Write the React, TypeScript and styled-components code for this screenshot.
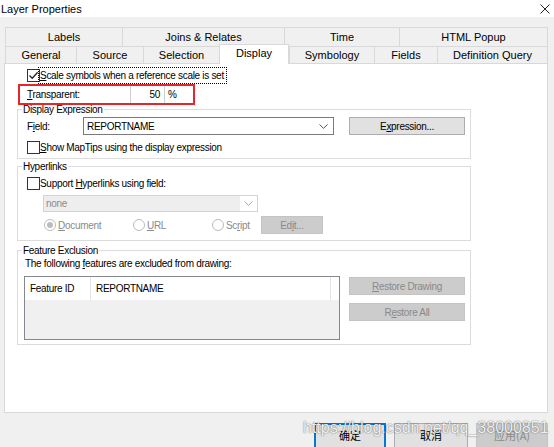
import React from "react";
import styled, { createGlobalStyle } from "styled-components";

const UI_FONT = `"Liberation Sans", "Noto Sans CJK SC", Arial, sans-serif`;

const GlobalStyle = createGlobalStyle`
  html, body {
    margin: 0;
    padding: 0;
    background: #f0f0f0;
  }
  body {
    font-family: "Liberation Sans", "Noto Sans CJK SC", Arial, sans-serif;
    color: #000;
  }
  * {
    box-sizing: border-box;
  }
`;

const Window = styled.div`
  position: relative;
  width: 554px;
  height: 447px;
  overflow: hidden;
  background: #f0f0f0;
`;

const TitleBar = styled.div`
  height: 17px;
  background: #fff;
  display: flex;
  align-items: center;
  justify-content: space-between;
  padding: 0 4px 0 1px;
  font-size: 11px;
  color: #000;
`;

const Body = styled.div`
  padding: 10px 6px 0 4px;
`;

const TabRow = styled.div<{ $height: number }>`
  display: flex;
  height: ${(p) => p.$height}px;
  margin-left: 1px;
`;

const Tab = styled.div<{ $width: number; $active?: boolean }>`
  flex: 0 0 ${(p) => p.$width}px;
  display: flex;
  align-items: center;
  justify-content: center;
  border-top: 1px solid #d9d9d9;
  border-left: 1px solid #d9d9d9;
  background: ${(p) => (p.$active ? "#fff" : "#f0f0f0")};
  font-size: 11px;
  color: #000;
  &:last-child {
    border-right: 1px solid #d9d9d9;
  }
  ${(p) =>
    p.$active &&
    `
    position: relative;
    z-index: 1;
    margin-top: -2px;
    margin-bottom: -1px;
    border-right: 1px solid #d9d9d9;
    padding-bottom: 3px;
  `}
`;

const Panel = styled.div`
  height: 350px;
  border: 1px solid #d9d9d9;
  background: #fff;
  font-family: ${UI_FONT};
  font-size: 10px;
  letter-spacing: -0.3px;
  display: flex;
  flex-direction: column;
`;

const CheckRow = styled.div<{ $top?: number; $left?: number }>`
  display: flex;
  align-items: center;
  height: 13px;
  margin-top: ${(p) => p.$top ?? 0}px;
  margin-left: ${(p) => p.$left ?? 0}px;
  line-height: 13px;
  white-space: nowrap;
`;

const Box = styled.span`
  flex: 0 0 13px;
  width: 13px;
  height: 13px;
  border: 1px solid #333;
  background: #fff;
  display: flex;
  align-items: center;
  justify-content: center;
`;

const FocusLabel = styled.span`
  outline: 1px dotted #000;
  outline-offset: 1px;
  padding: 0 1px 0 0;
`;

const RedBox = styled.div`
  display: flex;
  width: 177px;
  height: 21px;
  margin: 2px 0 0 13px;
  border: 2px solid #e5262a;
`;

const RedLabel = styled.div`
  width: 110px;
  padding-left: 7px;
  display: flex;
  align-items: center;
`;

const NumberCell = styled.div`
  width: 35px;
  border-left: 1px solid #cfcfcf;
  border-right: 1px solid #cfcfcf;
  display: flex;
  align-items: center;
  justify-content: flex-end;
  padding-right: 4px;
`;

const UnitCell = styled.div`
  display: flex;
  align-items: center;
  padding-left: 3px;
`;

const Group = styled.fieldset<{ $top: number }>`
  width: 454px;
  margin: ${(p) => p.$top}px 0 0 12px;
  padding: 0;
  border: 1px solid #dcdcdc;
  min-width: 0;
`;

const Legend = styled.legend`
  margin-left: 4px;
  padding: 0 1px;
  line-height: 11px;
`;

const GroupBody = styled.div<{ $pad: string }>`
  padding: ${(p) => p.$pad};
  display: flex;
  flex-direction: column;
`;

const FieldRow = styled.div`
  display: flex;
  align-items: center;
  height: 18px;
`;

const FieldLabel = styled.span`
  width: 56px;
`;

const Select = styled.div<{ $width: number }>`
  width: ${(p) => p.$width}px;
  height: 18px;
  border: 1px solid #7a7a7a;
  background: #fff;
  display: flex;
  align-items: center;
  justify-content: space-between;
  padding: 0 5px 0 3px;
`;

const DisabledSelect = styled.div`
  width: 215px;
  height: 17px;
  margin: 5px 0 0 16px;
  border: 1px solid #d4d4d4;
  background: #fff;
  display: flex;
  color: #8a8a8a;
`;

const DisabledField = styled.div`
  flex: 1;
  background: #eeeeee;
  display: flex;
  align-items: center;
  padding-left: 2px;
`;

const ChevronBox = styled.div`
  flex: 0 0 17px;
  display: flex;
  align-items: center;
  justify-content: center;
`;

const Button = styled.div<{ $width: number; $disabled?: boolean; $height?: number }>`
  width: ${(p) => p.$width}px;
  height: ${(p) => p.$height ?? 18}px;
  flex: 0 0 auto;
  display: flex;
  align-items: center;
  justify-content: center;
  background: ${(p) => (p.$disabled ? "#cccccc" : "#e1e1e1")};
  border: 1px solid ${(p) => (p.$disabled ? "#c4c4c4" : "#adadad")};
  color: ${(p) => (p.$disabled ? "#8a8a8a" : "#000")};
`;

const RadioRow = styled.div`
  display: grid;
  grid-template-columns: 89px 79px 49px 62px;
  align-items: center;
  height: 18px;
  margin: 4px 0 0 17px;
  color: #8a8a8a;
`;

const RadioItem = styled.div`
  display: flex;
  align-items: center;
  gap: 2px;
`;

const RadioCircle = styled.span<{ $checked?: boolean }>`
  width: 12px;
  height: 12px;
  border-radius: 50%;
  border: 1px solid #bcbcbc;
  background: #fff;
  display: flex;
  align-items: center;
  justify-content: center;
  &::after {
    content: "";
    width: 6px;
    height: 6px;
    border-radius: 50%;
    background: ${(p) => (p.$checked ? "#bcbcbc" : "transparent")};
  }
`;

const Note = styled.div`
  height: 12px;
  line-height: 12px;
  padding-left: 1px;
`;

const ExclusionRow = styled.div`
  display: flex;
  margin-top: 6px;
`;

const ListBox = styled.div`
  width: 316px;
  height: 64px;
  border: 1px solid #828790;
  background: #f0f0f0;
`;

const ListHeader = styled.div`
  display: flex;
  height: 23px;
  background: #fff;
`;

const HeaderCell = styled.div<{ $width: number }>`
  flex: 0 0 ${(p) => p.$width}px;
  display: flex;
  align-items: center;
  padding-left: 5px;
  border-right: 1px solid #e5e5e5;
`;

const SideButtons = styled.div`
  display: flex;
  flex-direction: column;
  gap: 8px;
  margin-left: 9px;
  padding-top: 1px;
`;

const Footer = styled.div`
  display: flex;
  justify-content: flex-end;
  gap: 8px;
  margin-top: 10px;
  font-family: "Noto Sans CJK SC", "Liberation Sans", sans-serif;
  font-size: 11px;
`;

const FooterButton = styled.div<{ $width: number; $kind: "default" | "normal" | "disabled" }>`
  width: ${(p) => p.$width}px;
  height: 26px;
  display: flex;
  align-items: center;
  justify-content: center;
  padding-bottom: 2px;
  background: ${(p) => (p.$kind === "disabled" ? "#cccccc" : "#e1e1e1")};
  border: 1px solid
    ${(p) => (p.$kind === "default" ? "#0078d7" : p.$kind === "disabled" ? "#c4c4c4" : "#adadad")};
  box-shadow: ${(p) => (p.$kind === "default" ? "inset 0 0 0 1px #0078d7" : "none")};
  color: ${(p) => (p.$kind === "disabled" ? "#8a8a8a" : "#000")};
`;

const Watermark = styled.div`
  position: absolute;
  left: 303px;
  top: 419px;
  font-family: "Liberation Sans", Arial, sans-serif;
  font-size: 16px;
  color: rgba(255, 255, 255, 0.92);
  text-shadow: 0 0 1px rgba(0, 0, 0, 0.55), 0 0 2px rgba(0, 0, 0, 0.25);
  white-space: nowrap;
  pointer-events: none;
`;

const Check = () => (
  <svg width="11" height="11" viewBox="0 0 11 11">
    <polyline points="1.5,5.5 4.2,8.3 9.7,2.3" fill="none" stroke="#222" strokeWidth="1.3" />
  </svg>
);

const Chevron = ({ color }: { color: string }) => (
  <svg width="9" height="5" viewBox="0 0 9 5">
    <polyline points="0.5,0.5 4.5,4.3 8.5,0.5" fill="none" stroke={color} strokeWidth="1" />
  </svg>
);

const Close = () => (
  <svg width="10" height="10" viewBox="0 0 10 10">
    <path d="M0.5 0.5 L9.5 9.5 M9.5 0.5 L0.5 9.5" stroke="#222" strokeWidth="1" />
  </svg>
);

const topTabs = [
  { label: "Labels", width: 117 },
  { label: "Joins & Relates", width: 162 },
  { label: "Time", width: 115 },
  { label: "HTML Popup", width: 149 },
];

const bottomTabs = [
  { label: "General", width: 71 },
  { label: "Source", width: 67 },
  { label: "Selection", width: 76 },
  { label: "Display", width: 70, active: true },
  { label: "Symbology", width: 85 },
  { label: "Fields", width: 63 },
  { label: "Definition Query", width: 111 },
];

export default function App() {
  return (
    <>
      <GlobalStyle />
      <Window>
        <TitleBar>
          <span>Layer Properties</span>
          <Close />
        </TitleBar>
        <Body>
          <TabRow $height={19}>
            {topTabs.map((t) => (
              <Tab key={t.label} $width={t.width}>
                {t.label}
              </Tab>
            ))}
          </TabRow>
          <TabRow $height={17}>
            {bottomTabs.map((t) => (
              <Tab key={t.label} $width={t.width} $active={t.active}>
                {t.label}
              </Tab>
            ))}
          </TabRow>
          <Panel>
            <CheckRow $top={5} $left={22}>
              <Box>
                <Check />
              </Box>
              <FocusLabel>
                <u>S</u>cale symbols when a reference scale is set
              </FocusLabel>
            </CheckRow>
            <RedBox>
              <RedLabel>
                <span>
                  <u>T</u>ransparent:
                </span>
              </RedLabel>
              <NumberCell>50</NumberCell>
              <UnitCell>%</UnitCell>
            </RedBox>

            <Group $top={-1}>
              <Legend>Display Expression</Legend>
              <GroupBody $pad="2px 0 4px 9px">
                <FieldRow>
                  <FieldLabel>
                    F<u>i</u>eld:
                  </FieldLabel>
                  <Select $width={251}>
                    <span>REPORTNAME</span>
                    <Chevron color="#555" />
                  </Select>
                  <Button $width={116} style={{ marginLeft: 15 }}>
                    <span>
                      E<u>x</u>pression...
                    </span>
                  </Button>
                </FieldRow>
                <CheckRow $top={6}>
                  <Box />
                  <span>
                    <u>S</u>how MapTips using the display expression
                  </span>
                </CheckRow>
              </GroupBody>
            </Group>

            <Group $top={2}>
              <Legend>Hyperlinks</Legend>
              <GroupBody $pad="5px 0 6px 9px">
                <CheckRow>
                  <Box />
                  <span>
                    Support <u>H</u>yperlinks using field:
                  </span>
                </CheckRow>
                <DisabledSelect>
                  <DisabledField>none</DisabledField>
                  <ChevronBox>
                    <Chevron color="#a8a8a8" />
                  </ChevronBox>
                </DisabledSelect>
                <RadioRow>
                  <RadioItem>
                    <RadioCircle $checked />
                    <span>
                      <u>D</u>ocument
                    </span>
                  </RadioItem>
                  <RadioItem>
                    <RadioCircle />
                    <span>
                      <u>U</u>RL
                    </span>
                  </RadioItem>
                  <RadioItem>
                    <RadioCircle />
                    <span>
                      Sc<u>r</u>ipt
                    </span>
                  </RadioItem>
                  <Button $width={62} $disabled>
                    <span>
                      Ed<u>i</u>t...
                    </span>
                  </Button>
                </RadioRow>
              </GroupBody>
            </Group>

            <Group $top={4}>
              <Legend>Feature Exclusion</Legend>
              <GroupBody $pad="2px 0 4px 6px">
                <Note>
                  The following <u>f</u>eatures are excluded from drawing:
                </Note>
                <ExclusionRow>
                  <ListBox>
                    <ListHeader>
                      <HeaderCell $width={66}>Feature ID</HeaderCell>
                      <HeaderCell $width={240}>REPORTNAME</HeaderCell>
                    </ListHeader>
                  </ListBox>
                  <SideButtons>
                    <Button $width={116} $disabled>
                      <span>
                        <u>R</u>estore Drawing
                      </span>
                    </Button>
                    <Button $width={116} $disabled>
                      <span>
                        R<u>e</u>store All
                      </span>
                    </Button>
                  </SideButtons>
                </ExclusionRow>
              </GroupBody>
            </Group>
          </Panel>
          <Footer>
            <FooterButton $width={72} $kind="default">
              确定
            </FooterButton>
            <FooterButton $width={74} $kind="normal">
              取消
            </FooterButton>
            <FooterButton $width={72} $kind="disabled">
              应用(A)
            </FooterButton>
          </Footer>
        </Body>
        <Watermark>https://blog.csdn.net/qq_38000851</Watermark>
      </Window>
    </>
  );
}
